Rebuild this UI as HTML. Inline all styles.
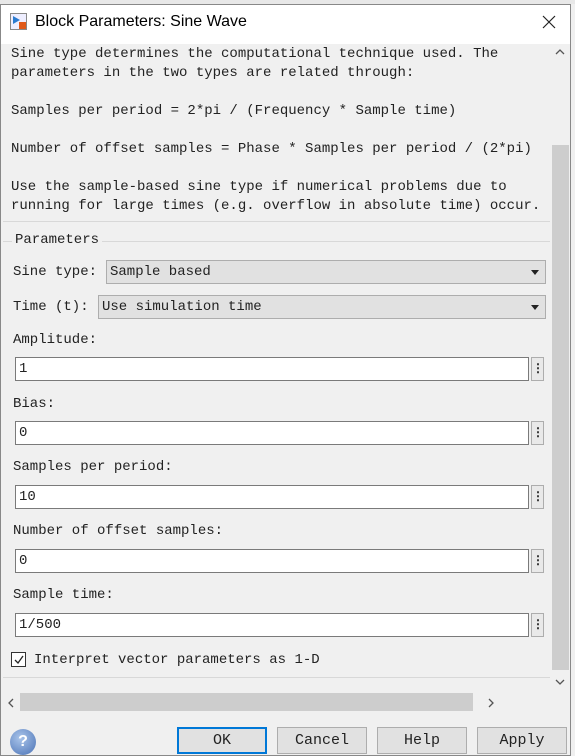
<!DOCTYPE html>
<html><head><style>
*{box-sizing:border-box;margin:0;padding:0}
body{width:575px;height:756px;background:#f0f0f0;position:relative;overflow:hidden;font-family:"Liberation Mono","Noto Serif CJK SC",monospace;font-size:14px;color:#222}
.a{position:absolute}
.win{left:0;top:4px;width:571px;height:752px;border:1px solid #888;background:#f0f0f0}
.title{left:1px;top:5px;width:569px;height:39px;background:#fff}
.t{white-space:pre;line-height:19px}
.combo{background:#e1e1e1;border:1px solid #adadad;height:24px;padding:2px 3px;line-height:19px}
.inp{background:#fff;border:1px solid #7a7a7a;height:24px;padding:2px 3px;line-height:19px;left:15px;width:514px}
.dots{left:531px;width:13px;height:24px;border:1px solid #adadad;background:#e9e9e9;font-weight:bold;text-align:center;line-height:22px;font-size:12px}
.btn{top:727px;width:90px;height:27px;border:1px solid #adadad;background:#e1e1e1;text-align:center;line-height:25px;font-size:15px}
</style></head><body>
<div class="a" style="left:0;top:0;width:575px;height:4px;background:#e8e8e8"></div>
<div class="a win"></div>
<div class="a title"></div>
<div class="a" style="left:10px;top:13px;width:17px;height:17px;border:1px solid #888;background:#eef"><div class="a" style="left:2px;top:2px;width:0;height:0;border-left:7px solid #2a7bd0;border-top:4px solid transparent;border-bottom:4px solid transparent"></div><div class="a" style="left:8px;top:8px;width:7px;height:7px;background:#e05a1a"></div></div>
<div class="a" style="left:35px;top:13px;font-family:'Liberation Sans',sans-serif;font-size:16px;color:#000">Block Parameters: Sine Wave</div>
<svg class="a" style="left:542px;top:15px" width="14" height="14"><path d="M1 1L13 13M13 1L1 13" stroke="#222" stroke-width="1.2"/></svg>
<!-- description -->
<div class="a" style="left:3px;top:44px;width:547px;height:178px;border-bottom:1px solid #d8d8d8"></div>
<div class="a t" style="left:11px;top:45px">Sine type determines the computational technique used. The
parameters in the two types are related through:

Samples per period = 2*pi / (Frequency * Sample time)

Number of offset samples = Phase * Samples per period / (2*pi)

Use the sample-based sine type if numerical problems due to
running for large times (e.g. overflow in absolute time) occur.</div>
<!-- vertical scrollbar -->
<div class="a" style="left:550px;top:44px;width:20px;height:646px;background:#f0f0f0"></div>
<div class="a" style="left:552px;top:145px;width:17px;height:525px;background:#cdcdcd"></div>
<svg class="a" style="left:555px;top:48px" width="10" height="8"><path d="M1 6L5 2L9 6" stroke="#555" fill="none" stroke-width="1.3"/></svg>
<svg class="a" style="left:555px;top:678px" width="10" height="8"><path d="M1 2L5 6L9 2" stroke="#555" fill="none" stroke-width="1.3"/></svg>
<!-- parameters group -->
<div class="a" style="left:3px;top:241px;width:547px;height:437px;border-top:1px solid #d8d8d8;border-bottom:1px solid #d8d8d8"></div>
<div class="a t" style="left:12px;top:231px;background:#f0f0f0;padding:0 3px">Parameters</div>
<div class="a t" style="left:13px;top:263px">Sine type:</div>
<div class="a combo" style="left:106px;top:260px;width:440px">Sample based</div>
<div class="a" style="left:531px;top:270px;border-left:4px solid transparent;border-right:4px solid transparent;border-top:5px solid #222"></div>
<div class="a t" style="left:13px;top:298px">Time (t):</div>
<div class="a combo" style="left:98px;top:295px;width:448px">Use simulation time</div>
<div class="a" style="left:531px;top:305px;border-left:4px solid transparent;border-right:4px solid transparent;border-top:5px solid #222"></div>

<div class="a t" style="left:13px;top:331px">Amplitude:</div>
<div class="a inp" style="top:357px">1</div><div class="a dots" style="top:357px">⋮</div>
<div class="a t" style="left:13px;top:395px">Bias:</div>
<div class="a inp" style="top:421px">0</div><div class="a dots" style="top:421px">⋮</div>
<div class="a t" style="left:13px;top:458px">Samples per period:</div>
<div class="a inp" style="top:485px">10</div><div class="a dots" style="top:485px">⋮</div>
<div class="a t" style="left:13px;top:522px">Number of offset samples:</div>
<div class="a inp" style="top:549px">0</div><div class="a dots" style="top:549px">⋮</div>
<div class="a t" style="left:13px;top:586px">Sample time:</div>
<div class="a inp" style="top:613px">1/500</div><div class="a dots" style="top:613px">⋮</div>
<div class="a" style="left:11px;top:652px;width:15px;height:15px;border:1px solid #333;background:#fff"></div>
<svg class="a" style="left:13px;top:654px" width="12" height="12"><path d="M2 6L5 9L10 2" stroke="#222" fill="none" stroke-width="1.3"/></svg>
<div class="a t" style="left:34px;top:651px">Interpret vector parameters as 1-D</div>
<!-- horizontal scrollbar -->
<div class="a" style="left:1px;top:690px;width:569px;height:22px;background:#f0f0f0"></div>
<div class="a" style="left:20px;top:693px;width:453px;height:18px;background:#cdcdcd"></div>
<svg class="a" style="left:7px;top:698px" width="8" height="10"><path d="M6 1L2 5L6 9" stroke="#555" fill="none" stroke-width="1.3"/></svg>
<svg class="a" style="left:487px;top:698px" width="8" height="10"><path d="M2 1L6 5L2 9" stroke="#555" fill="none" stroke-width="1.3"/></svg>
<!-- buttons -->
<div class="a" style="left:10px;top:729px;width:26px;height:26px;border-radius:50%;background:radial-gradient(circle at 40% 35%,#a9c4ea,#4a72b5);color:#fff;text-align:center;line-height:26px;font-family:'Liberation Sans',sans-serif;font-weight:bold;font-size:16px">?</div>
<div class="a btn" style="left:177px;border:2px solid #0078d7;line-height:23px">OK</div>
<div class="a btn" style="left:277px">Cancel</div>
<div class="a btn" style="left:377px">Help</div>
<div class="a btn" style="left:477px">Apply</div>
</body></html>
